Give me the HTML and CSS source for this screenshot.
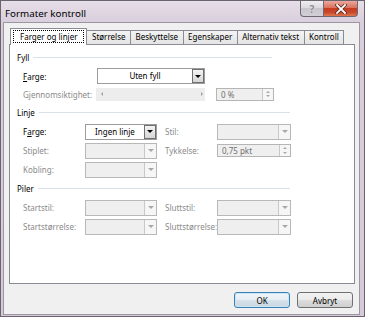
FILE: index.html
```html
<!DOCTYPE html>
<html lang="no">
<head>
    <meta charset="UTF-8">
    <meta name="viewport" content="width=device-width, initial-scale=1.0">
    <title>Formater kontroll</title>
    <link rel="stylesheet" href="styles.css">
</head>
<body>
    <div class="window">
        <div class="titlebar">
            <span class="title">Formater kontroll</span>
            <div class="caption">
                <div class="cap-btn help">?</div>
                <div class="cap-btn close">
                    <svg width="12" height="10" viewBox="0 0 12 10">
                        <path d="M2 1 L10 9 M10 1 L2 9" stroke="#5a2a20" stroke-width="3.4" stroke-linecap="square"/>
                        <path d="M2 1 L10 9 M10 1 L2 9" stroke="#ffffff" stroke-width="1.8" stroke-linecap="square"/>
                    </svg>
                </div>
            </div>
        </div>

        <div class="client">
            <div class="tabs">
                <div class="tab active"><span class="focus">Farger og linjer</span></div>
                <div class="tab">Størrelse</div>
                <div class="tab">Beskyttelse</div>
                <div class="tab">Egenskaper</div>
                <div class="tab">Alternativ tekst</div>
                <div class="tab">Kontroll</div>
            </div>

            <div class="panel">
                <div class="group-head"><span>Fyll</span><i class="rule"></i></div>
                <div class="row first">
                    <label class="lbl-fill"><u>F</u>arge:</label>
                    <div class="combo wide">
                        <span class="value">Uten fyll</span>
                        <span class="drop"><i class="tri"></i></span>
                    </div>
                </div>
                <div class="row">
                    <label class="lbl-fill off">Gjennomsiktighet:</label>
                    <div class="slider"><i class="tri-left"></i><i class="tri-right"></i></div>
                    <div class="spin short">
                        <span class="value">0 %</span>
                        <span class="arrows"><i class="up"></i><i class="down"></i></span>
                    </div>
                </div>

                <div class="group-head long"><span>Linje</span><i class="rule"></i></div>
                <div class="grid">
                    <label>F<u>a</u>rge:</label>
                    <div class="combo">
                        <span class="value">Ingen linje</span>
                        <span class="drop"><i class="tri"></i></span>
                    </div>
                    <label class="off">Stil:</label>
                    <div class="combo off long"><span class="value"></span><span class="drop"><i class="tri"></i></span></div>

                    <label class="off">Stiplet:</label>
                    <div class="combo off"><span class="value"></span><span class="drop"><i class="tri"></i></span></div>
                    <label class="off">Tykkelse:</label>
                    <div class="spin long">
                        <span class="value">0,75 pkt</span>
                        <span class="arrows"><i class="up"></i><i class="down"></i></span>
                    </div>

                    <label class="off">Kobling:</label>
                    <div class="combo off"><span class="value"></span><span class="drop"><i class="tri"></i></span></div>
                </div>

                <div class="group-head long"><span>Piler</span><i class="rule"></i></div>
                <div class="grid">
                    <label class="off">Startstil:</label>
                    <div class="combo off"><span class="value"></span><span class="drop"><i class="tri"></i></span></div>
                    <label class="off">Sluttstil:</label>
                    <div class="combo off long"><span class="value"></span><span class="drop"><i class="tri"></i></span></div>

                    <label class="off">Startstørrelse:</label>
                    <div class="combo off"><span class="value"></span><span class="drop"><i class="tri"></i></span></div>
                    <label class="off">Sluttstørrelse:</label>
                    <div class="combo off long"><span class="value"></span><span class="drop"><i class="tri"></i></span></div>
                </div>
            </div>

            <div class="buttons">
                <button class="push default">OK</button>
                <button class="push">Avbryt</button>
            </div>
        </div>
    </div>
</body>
</html>
```

FILE: styles.css
```css
body {
    margin: 0;
    font-family: "Noto Sans", sans-serif;
    font-size: 8px;
    color: #000;
}
.window {
    width: 365px;
    height: 317px;
    box-sizing: border-box;
    border: 1px solid #69646e;
    background: linear-gradient(to bottom, #e6dee8 0px, #d9cedc 22px, #d6cad8 100%);
    display: flex;
    flex-direction: column;
}
.titlebar {
    height: 21px;
    display: flex;
    justify-content: space-between;
    align-items: flex-start;
    padding-left: 4px;
}
.title {
    font-size: 9.8px;
    line-height: 14px;
    margin-top: 6px;
}
.caption {
    display: flex;
    margin-right: 6px;
}
.cap-btn {
    height: 16px;
    box-sizing: border-box;
    border: 1px solid #6f6976;
    border-top: none;
    display: flex;
    align-items: center;
    justify-content: center;
}
.help {
    width: 23px;
    border-right: none;
    border-bottom-left-radius: 4px;
    background: linear-gradient(to bottom, #eeedf1 0%, #dcd9df 45%, #c9c5cd 50%, #d3cfd7 100%);
    color: #8b8792;
    font-size: 10px;
    font-weight: bold;
    text-shadow: 0 0 1px #fff;
}
.close {
    width: 35px;
    border-bottom-right-radius: 4px;
    background: linear-gradient(to bottom, #eaa99b 0%, #d9725d 45%, #c63c21 50%, #c8462b 75%, #e0764f 100%);
}

.client {
    flex: 1;
    margin: 0 4px 1px 2px;
    border: 1px solid #9b96a1;
    background: #f0f0f0;
    padding-top: 5px;
    display: flex;
    flex-direction: column;
}

.tabs {
    display: flex;
    align-items: flex-end;
    height: 16px;
    margin-left: 6px;
}
.tab {
    height: 14px;
    box-sizing: border-box;
    border: 1px solid #898c95;
    border-bottom: none;
    margin-left: -1px;
    padding: 0 4.5px;
    line-height: 12px;
    background: linear-gradient(to bottom, #f3f3f3, #e4e4e4);
}
.tab.active {
    height: 17px;
    margin-left: 0;
    margin-bottom: -1px;
    padding: 1px 2px 0 2px;
    background: #fff;
    position: relative;
    z-index: 1;
}
.focus {
    display: block;
    border: 1px dotted #000;
    line-height: 11px;
    padding: 0 6px;
}

.panel {
    margin: 0 4px 0 5px;
    height: 240px;
    box-sizing: border-box;
    border: 1px solid #898c95;
    background: #fff;
    padding-top: 5px;
}
.group-head {
    display: flex;
    align-items: center;
    height: 14px;
    margin-left: 7px;
    width: 255px;
}
.group-head.long {
    width: 273px;
    margin-top: 2px;
}
.group-head .rule {
    flex: 1;
    height: 1px;
    margin-left: 4px;
    background: #d8e2ea;
}

.row {
    display: flex;
    align-items: center;
    height: 18px;
    padding-left: 13px;
}
.row.first {
    margin-top: 3px;
}
.lbl-fill {
    width: 74px;
}
.off {
    color: #8a8a8a;
}

.grid {
    display: grid;
    grid-template-columns: 62px 80px 52px 74px;
    grid-auto-rows: 19px;
    align-items: center;
    padding-left: 13px;
    margin-top: 1px;
}
.group-head + .grid {
    margin-top: 3px;
}

.combo {
    width: 72px;
    height: 16px;
    box-sizing: border-box;
    border: 1px solid #9c9c9c;
    background: #fff;
    display: flex;
}
.combo.wide {
    width: 108px;
}
.combo.long {
    width: 74px;
}
.combo .value {
    flex: 1;
    text-align: center;
    line-height: 14px;
}
.combo .drop {
    width: 12px;
    box-sizing: border-box;
    border: 1px solid #707070;
    background: linear-gradient(to bottom, #f4f4f4, #d6d6d6);
    display: flex;
    align-items: center;
    justify-content: center;
}
.tri {
    width: 0;
    height: 0;
    border-left: 3px solid transparent;
    border-right: 3px solid transparent;
    border-top: 3px solid #000;
}
.combo.off {
    border-color: #b8b8b8;
    background: #efefef;
}
.combo.off .drop {
    border: none;
    border-left: 1px solid #c8c8c8;
    background: #f6f6f6;
}
.combo.off .tri {
    border-top-color: #a8a8a8;
}

.slider {
    width: 109px;
    height: 13px;
    box-sizing: border-box;
    background: #ededed;
    display: flex;
    align-items: center;
    justify-content: space-between;
    padding: 0 2px 0 5px;
    margin-left: -1px;
}
.tri-left, .tri-right {
    width: 0;
    height: 0;
    border-top: 2px solid transparent;
    border-bottom: 2px solid transparent;
}
.tri-left {
    border-right: 2px solid #a0a0a0;
}
.tri-right {
    border-left: 2px solid #a0a0a0;
}

.spin {
    height: 13px;
    box-sizing: border-box;
    border: 1px solid #b5b5b5;
    background: #efefef;
    display: flex;
}
.spin.short {
    width: 58px;
    margin-left: 11px;
}
.spin.long {
    width: 74px;
}
.spin .value {
    flex: 1;
    color: #707070;
    line-height: 11px;
    padding-left: 4px;
}
.spin .arrows {
    width: 11px;
    border-left: 1px solid #c8c8c8;
    background: #f6f6f6;
    display: flex;
    flex-direction: column;
    align-items: center;
    justify-content: space-around;
    padding: 1px 0;
    box-sizing: border-box;
}
.spin .up, .spin .down {
    width: 0;
    height: 0;
    border-left: 2px solid transparent;
    border-right: 2px solid transparent;
}
.spin .up {
    border-bottom: 2px solid #a8a8a8;
}
.spin .down {
    border-top: 2px solid #a8a8a8;
}

.buttons {
    display: flex;
    justify-content: flex-end;
    gap: 7px;
    margin: 8px 6px 0 0;
}
.push {
    width: 56px;
    height: 16px;
    box-sizing: border-box;
    border: 1px solid #707070;
    border-radius: 3px;
    padding: 0;
    font-family: inherit;
    font-size: 8px;
    color: #000;
    background: linear-gradient(to bottom, #f2f2f2 0%, #ebebeb 49%, #dddddd 50%, #cfcfcf 100%);
}
.push.default {
    border-color: #3c7fb1;
    box-shadow: inset 0 0 0 1px #c8e6f8;
    background: linear-gradient(to bottom, #f0f6fa 0%, #e6eef4 49%, #d6e1e9 50%, #cbd8e2 100%);
}
```
